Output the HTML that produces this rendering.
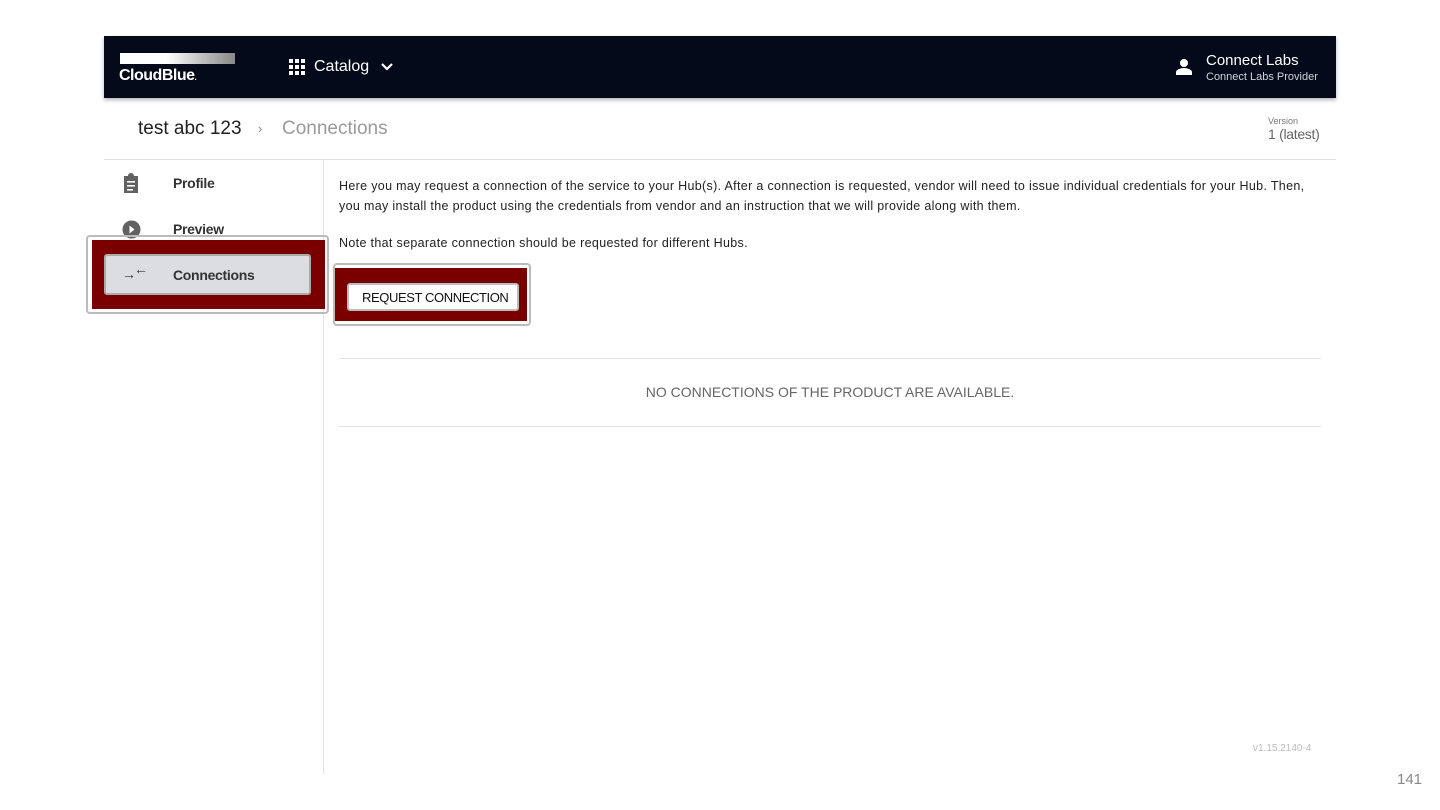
<!DOCTYPE html>
<html><head><style>
*{margin:0;padding:0;box-sizing:border-box}
body{width:1440px;height:810px;background:#fff;font-family:"Liberation Sans",sans-serif;position:relative;overflow:hidden;color:#212121}
.abs{position:absolute}
</style></head><body>
<div class="abs" style="left:104px;top:36px;width:1232px;height:62px;background:#050a1a;box-shadow:0 2px 4px rgba(0,0,0,.3)"></div>
<div class="abs" style="left:120px;top:53px;width:115px;height:11px;background:linear-gradient(90deg,#fff 40%,#888)"></div>
<div class="abs" style="left:119px;top:67px;color:#fff;font-weight:bold;font-size:16px;letter-spacing:-0.5px">CloudBlue<span style="font-size:8px">.</span></div>
<svg class="abs" style="left:289px;top:59px" width="16" height="16" viewBox="0 0 16 16" fill="#fff">
<rect x="0" y="0" width="4" height="4"/><rect x="6" y="0" width="4" height="4"/><rect x="12" y="0" width="4" height="4"/>
<rect x="0" y="6" width="4" height="4"/><rect x="6" y="6" width="4" height="4"/><rect x="12" y="6" width="4" height="4"/>
<rect x="0" y="12" width="4" height="4"/><rect x="6" y="12" width="4" height="4"/><rect x="12" y="12" width="4" height="4"/></svg>
<div class="abs" style="left:314px;top:58px;color:#fff;font-size:16px">Catalog</div>
<svg class="abs" style="left:380px;top:62px" width="14" height="10" viewBox="0 0 14 10"><path d="M2 2l5 5 5-5" stroke="#fff" stroke-width="2.2" fill="none"/></svg>
<svg class="abs" style="left:1176px;top:58px" width="16" height="18" viewBox="0 0 16 18" fill="#fff"><circle cx="8" cy="5" r="4"/><path d="M0 17v-3c0-2 4-4 8-4s8 2 8 4v3z"/></svg>
<div class="abs" style="left:1206px;top:52px;color:#fff;font-size:15px">Connect Labs</div>
<div class="abs" style="left:1206px;top:71px;color:#d0d4dc;font-size:11px">Connect Labs Provider</div>

<div class="abs" style="left:138px;top:118px;font-size:19px;color:#212121">test abc 123</div>
<div class="abs" style="left:258px;top:121px;font-size:13px;color:#888">›</div>
<div class="abs" style="left:282px;top:118px;font-size:19px;color:#9a9a9a">Connections</div>
<div class="abs" style="left:1268px;top:116px;font-size:9px;color:#777">Version</div>
<div class="abs" style="left:1268px;top:126px;font-size:14px;color:#666;letter-spacing:-0.3px">1 (latest)</div>
<div class="abs" style="left:104px;top:159px;width:1232px;height:1px;background:#e2e2e2"></div>
<div class="abs" style="left:323px;top:160px;width:1px;height:614px;background:#e2e2e2"></div>

<svg class="abs" style="left:122px;top:173px" width="18" height="20" viewBox="0 0 18 20" fill="#616161"><path d="M2 3h4a3 3 0 0 1 6 0h4v17H2z"/><rect x="5" y="8" width="8" height="1.6" fill="#fff"/><rect x="5" y="12" width="8" height="1.6" fill="#fff"/><rect x="5" y="16" width="6" height="1.6" fill="#fff"/></svg>
<div class="abs" style="left:173px;top:175px;font-size:14px;font-weight:bold;color:#333;letter-spacing:-0.3px">Profile</div>
<svg class="abs" style="left:122px;top:220px" width="19" height="19" viewBox="0 0 19 19"><circle cx="9.5" cy="9.5" r="9" fill="#616161"/><path d="M7.5 5.5l5 4-5 4z" fill="#fff"/></svg>
<div class="abs" style="left:173px;top:221px;font-size:14px;font-weight:bold;color:#333;letter-spacing:-0.3px">Preview</div>

<div class="abs" style="left:86px;top:235px;width:243px;height:79px;border:2px solid #bbb;border-radius:4px"></div>
<div class="abs" style="left:92px;top:240px;width:233px;height:69px;background:#7a0000"></div>
<div class="abs" style="left:104px;top:254px;width:207px;height:41px;background:#dcdde1;border:2px solid #aaa;border-radius:3px"></div>
<div class="abs" style="left:122px;top:266px;font-size:14px;color:#333;letter-spacing:-2px">→<span style="position:relative;top:-5px">←</span></div>
<div class="abs" style="left:173px;top:267px;font-size:14px;font-weight:bold;color:#333;letter-spacing:-0.3px">Connections</div>

<div class="abs" style="left:339px;top:176px;font-size:12.5px;line-height:20px;color:#222;white-space:nowrap;letter-spacing:0.33px">Here you may request a connection of the service to your Hub(s). After a connection is requested, vendor will need to issue individual credentials for your Hub. Then,<br>you may install the product using the credentials from vendor and an instruction that we will provide along with them.</div>
<div class="abs" style="left:339px;top:236px;font-size:12.5px;color:#222;letter-spacing:0.33px">Note that separate connection should be requested for different Hubs.</div>

<div class="abs" style="left:333px;top:263px;width:198px;height:63px;border:2px solid #bbb;border-radius:4px"></div>
<div class="abs" style="left:335px;top:268px;width:192px;height:53px;background:#7a0000"></div>
<div class="abs" style="left:347px;top:283px;width:172px;height:28px;background:#fff;border:2px solid #bbb;border-radius:3px"></div>
<div class="abs" style="left:362px;top:290px;font-size:13px;color:#111;letter-spacing:-0.4px">REQUEST CONNECTION</div>

<div class="abs" style="left:339px;top:358px;width:982px;height:1px;background:#e2e2e2"></div>
<div class="abs" style="left:339px;top:384px;width:982px;text-align:center;font-size:14px;color:#666">NO CONNECTIONS OF THE PRODUCT ARE AVAILABLE.</div>
<div class="abs" style="left:339px;top:426px;width:982px;height:1px;background:#e2e2e2"></div>
<div class="abs" style="left:1253px;top:743px;font-size:10px;color:#bbb">v1.15.2140-4</div>
<div class="abs" style="left:1397px;top:771px;font-size:15px;color:#888">141</div>
</body></html>
